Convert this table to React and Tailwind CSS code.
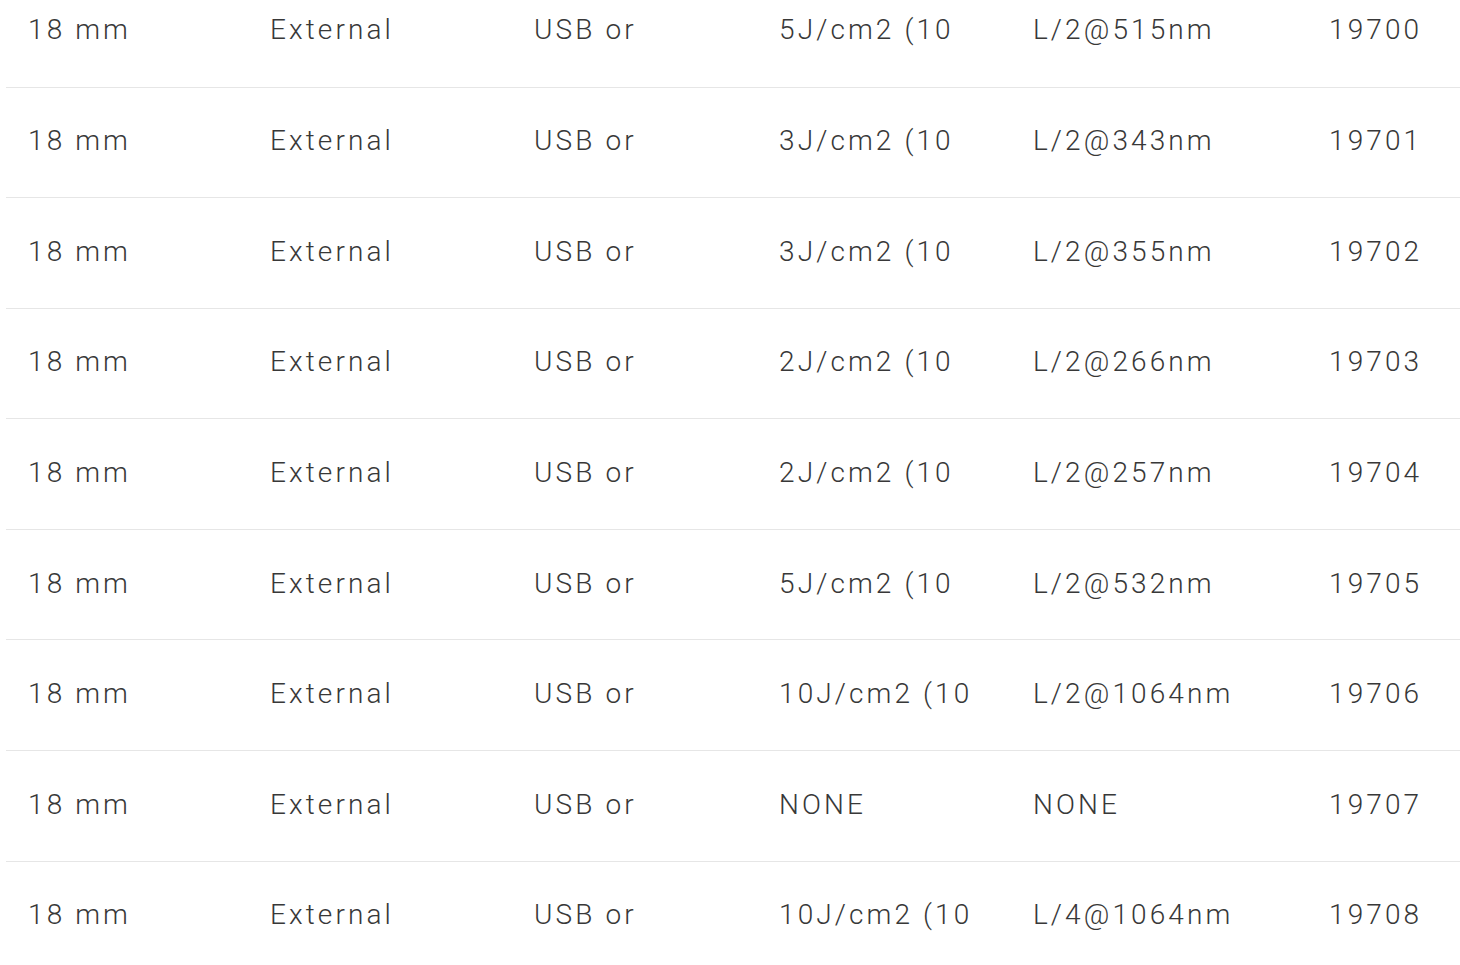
import React from "react";

const rows = [
  ["5J/cm2 (10", "L/2@515nm", "19700"],
  ["3J/cm2 (10", "L/2@343nm", "19701"],
  ["3J/cm2 (10", "L/2@355nm", "19702"],
  ["2J/cm2 (10", "L/2@266nm", "19703"],
  ["2J/cm2 (10", "L/2@257nm", "19704"],
  ["5J/cm2 (10", "L/2@532nm", "19705"],
  ["10J/cm2 (10", "L/2@1064nm", "19706"],
  ["NONE", "NONE", "19707"],
  ["10J/cm2 (10", "L/4@1064nm", "19708"],
];

function Row({ cells, first }) {
  return (
    <div
      className={`grid grid-cols-[242px_264px_245px_254px_296px_1fr] items-center border-b border-[#e6e6e6] ${
        first ? "h-[87.5px] pb-[26px]" : "h-[110.6px] pb-[2px]"
      }`}
    >
      {cells.map((c, i) => (
        <div key={i} className="pl-[22px] whitespace-nowrap overflow-hidden">
          {c}
        </div>
      ))}
    </div>
  );
}

export default function App() {
  return (
    <div className="min-h-screen bg-white overflow-hidden">
      <div
        className="ml-[6px] text-[28px] leading-[34px] font-light tracking-[3.1px] text-[#383838]"
        style={{ fontFamily: "Roboto, 'Liberation Sans', sans-serif" }}
      >
        {rows.map((r, i) => (
          <Row
            key={i}
            first={i === 0}
            cells={["18 mm", "External", "USB or", r[0], r[1], r[2]]}
          />
        ))}
      </div>
    </div>
  );
}
